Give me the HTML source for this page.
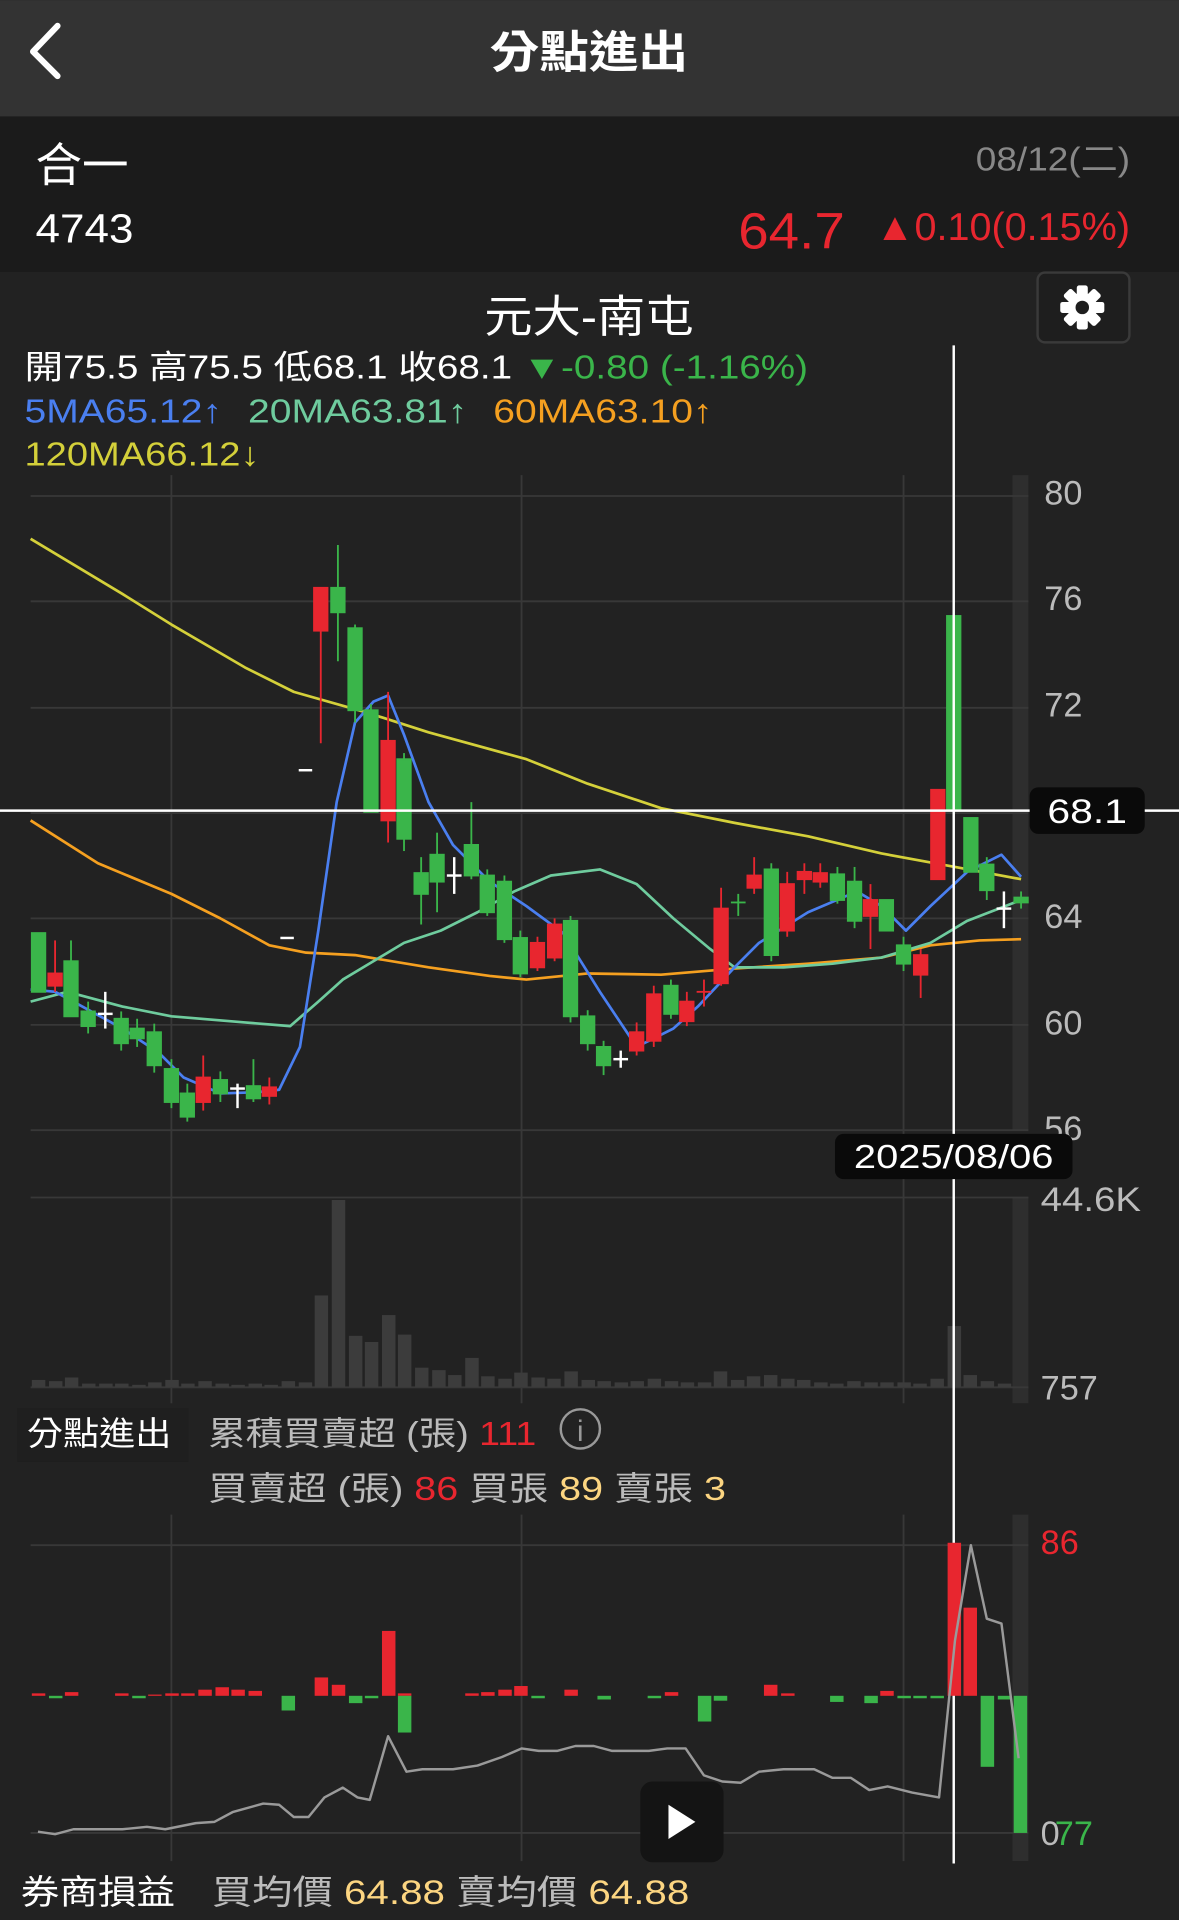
<!DOCTYPE html>
<html><head><meta charset="utf-8"><style>
html,body{margin:0;padding:0;background:#222;}
svg{display:block;}
text{font-family:"Liberation Sans","Noto Sans CJK TC",sans-serif;}
</style></head><body>
<svg width="1179" height="1920" viewBox="0 0 963 1568" xmlns="http://www.w3.org/2000/svg">
<rect x="0" y="0" width="963" height="1568" fill="#222"/>
<rect x="0" y="0" width="963" height="95" fill="#333"/>
<path d="M47 21 L27 42 L47 62" fill="none" stroke="#fff" stroke-width="5" stroke-linecap="round" stroke-linejoin="round"/>
<text x="481" y="55" fill="#fff" font-size="36" font-weight="bold" text-anchor="middle" textLength="162" lengthAdjust="spacingAndGlyphs">分點進出</text>
<rect x="0" y="95" width="963" height="127" fill="#1b1b1b"/>
<text x="29" y="148" fill="#fff" font-size="38">合一</text>
<text x="29" y="198" fill="#fff" font-size="33" textLength="80" lengthAdjust="spacingAndGlyphs">4743</text>
<text x="797" y="139" fill="#888" font-size="27" textLength="126" lengthAdjust="spacingAndGlyphs">08/12(二)</text>
<text x="603" y="203" fill="#e8262f" font-size="42" textLength="87" lengthAdjust="spacingAndGlyphs">64.7</text>
<text x="715" y="196" fill="#e8262f" font-size="32" textLength="208" lengthAdjust="spacingAndGlyphs">▲0.10(0.15%)</text>
<rect x="847.5" y="222.5" width="75" height="57" rx="6" fill="#1e1e1e" stroke="#3a3a3a" stroke-width="2"/>
<g transform="translate(884 251)" fill="#fff">
<circle r="12"/>
<g><rect x="-4.5" y="-18" width="9" height="36" rx="2"/><rect x="-4.5" y="-18" width="9" height="36" rx="2" transform="rotate(45)"/><rect x="-4.5" y="-18" width="9" height="36" rx="2" transform="rotate(90)"/><rect x="-4.5" y="-18" width="9" height="36" rx="2" transform="rotate(135)"/></g>
<circle r="5.5" fill="#1e1e1e"/>
</g>
<text x="481" y="271" fill="#fff" font-size="36" text-anchor="middle" textLength="171" lengthAdjust="spacingAndGlyphs">元大-南屯</text>
<text x="20" y="309" font-size="27" fill="#fff" textLength="640" lengthAdjust="spacingAndGlyphs">開75.5 高75.5 低68.1 收68.1 <tspan fill="#3ab54a">▼-0.80 (-1.16%)</tspan></text>
<text x="20" y="345" font-size="27" textLength="562" lengthAdjust="spacingAndGlyphs"><tspan fill="#4a7ff0">5MA65.12↑</tspan><tspan fill="#6fcc9e" dx="18">20MA63.81↑</tspan><tspan fill="#f5a020" dx="18">60MA63.10↑</tspan></text>
<text x="20" y="380" font-size="27" fill="#d4d03a" textLength="192" lengthAdjust="spacingAndGlyphs">120MA66.12↓</text>

<rect x="827" y="388" width="13" height="535" fill="#2e2e2e"/>
<rect x="827" y="978" width="13" height="168" fill="#2e2e2e"/>
<rect x="827" y="1237" width="13" height="283" fill="#2e2e2e"/>
<g stroke="#383838" stroke-width="1.5">
<line x1="25" y1="405" x2="840" y2="405"/><line x1="25" y1="491" x2="840" y2="491"/><line x1="25" y1="578" x2="840" y2="578"/><line x1="25" y1="664" x2="840" y2="664"/><line x1="25" y1="750" x2="840" y2="750"/><line x1="25" y1="837" x2="840" y2="837"/><line x1="25" y1="923" x2="840" y2="923"/>
<line x1="25" y1="978" x2="840" y2="978"/><line x1="25" y1="1133" x2="840" y2="1133"/>
<line x1="25" y1="1262" x2="840" y2="1262"/><line x1="25" y1="1497" x2="840" y2="1497"/>
<line x1="140" y1="388" x2="140" y2="1146"/><line x1="426" y1="388" x2="426" y2="1146"/><line x1="738" y1="388" x2="738" y2="1146"/>
<line x1="140" y1="1237" x2="140" y2="1520"/><line x1="426" y1="1237" x2="426" y2="1520"/><line x1="738" y1="1237" x2="738" y2="1520"/>
</g>
<g fill="#bbb" font-size="28">
<text x="853" y="412">80</text><text x="853" y="498">76</text><text x="853" y="585">72</text><text x="853" y="758">64</text><text x="853" y="845">60</text><text x="853" y="931">56</text>
<text x="850" y="989" textLength="82" lengthAdjust="spacingAndGlyphs">44.6K</text><text x="850" y="1143">757</text>
</g>

<g fill="none" stroke-width="2.2" stroke-linejoin="round">
<polyline stroke="#d4d03a" points="25,440 100,485 140,510 200,545 240,565 300,582 350,598 430,620 480,640 540,660 600,672 660,683 720,697 780,708 834,718"/>
<polyline stroke="#f5a020" points="25,670 80,705 140,730 180,750 220,772 250,778 290,780 350,790 400,797 430,800 480,795 540,796 600,791 660,787 720,782 760,772 800,768 834,767"/>
<polyline stroke="#6fcc9e" points="25,818 55,810 100,822 140,830 200,835 237,838 260,818 280,800 300,788 330,770 360,760 390,745 420,728 450,715 490,710 520,722 550,750 580,775 600,790 640,790 680,787 720,782 760,770 790,752 834,735"/>
<polyline stroke="#4a7ff0" points="25,808 45,810 60,818 100,840 130,860 150,880 180,893 210,892 228,890 245,855 260,760 275,655 290,590 305,573 317,568 330,600 350,655 370,690 400,720 430,740 460,762 490,810 520,855 550,840 570,822 600,790 620,770 660,745 700,728 720,740 740,760 760,740 790,712 818,698 834,716"/>
</g>

<g stroke-width="1.5">
<g fill="#3ab54a" stroke="#3ab54a">
<rect x="26" y="762" width="11" height="48"/>
<line x1="58" y1="768" x2="58" y2="830"/><rect x="52.5" y="785" width="11" height="45"/>
<line x1="72" y1="818" x2="72" y2="844"/><rect x="66.5" y="826" width="11" height="12"/>
<line x1="99" y1="826" x2="99" y2="858"/><rect x="93.5" y="832" width="11" height="20"/>
<line x1="112" y1="832" x2="112" y2="855"/><rect x="106.5" y="840" width="11" height="8"/>
<line x1="126" y1="836" x2="126" y2="876"/><rect x="120.5" y="843" width="11" height="27"/>
<line x1="140" y1="865" x2="140" y2="905"/><rect x="134.5" y="873" width="11" height="27"/>
<line x1="153" y1="885" x2="153" y2="916"/><rect x="147.5" y="893" width="11" height="19"/>
<line x1="180" y1="875" x2="180" y2="900"/><rect x="174.5" y="882" width="11" height="11"/>
<line x1="207" y1="865" x2="207" y2="900"/><rect x="201.5" y="887" width="11" height="10"/>
<line x1="276" y1="445" x2="276" y2="540"/><rect x="270.5" y="480" width="11" height="20"/>
<line x1="290" y1="510" x2="290" y2="590"/><rect x="284.5" y="513" width="11" height="67"/>
<line x1="303" y1="575" x2="303" y2="663"/><rect x="297.5" y="580" width="11" height="83"/>
<line x1="330" y1="615" x2="330" y2="695"/><rect x="324.5" y="620" width="11" height="65"/>
<line x1="344" y1="700" x2="344" y2="755"/><rect x="338.5" y="713" width="11" height="17"/>
<line x1="357" y1="680" x2="357" y2="745"/><rect x="351.5" y="698" width="11" height="22"/>
<line x1="385" y1="655" x2="385" y2="718"/><rect x="379.5" y="690" width="11" height="25"/>
<line x1="398" y1="710" x2="398" y2="748"/><rect x="392.5" y="715" width="11" height="30"/>
<line x1="412" y1="715" x2="412" y2="770"/><rect x="406.5" y="720" width="11" height="47"/>
<line x1="425" y1="760" x2="425" y2="798"/><rect x="419.5" y="766" width="11" height="29"/>
<line x1="466" y1="748" x2="466" y2="835"/><rect x="460.5" y="752" width="11" height="78"/>
<line x1="480" y1="825" x2="480" y2="858"/><rect x="474.5" y="830" width="11" height="22"/>
<line x1="493" y1="850" x2="493" y2="878"/><rect x="487.5" y="855" width="11" height="15"/>
<line x1="548" y1="800" x2="548" y2="832"/><rect x="542.5" y="805" width="11" height="23"/>
<line x1="630" y1="705" x2="630" y2="785"/><rect x="624.5" y="710" width="11" height="70"/>
<line x1="684" y1="708" x2="684" y2="738"/><rect x="678.5" y="714" width="11" height="21"/>
<line x1="698" y1="708" x2="698" y2="758"/><rect x="692.5" y="720" width="11" height="32"/>
<rect x="718.5" y="735" width="11" height="25"/>
<line x1="738" y1="765" x2="738" y2="793"/><rect x="732.5" y="772" width="11" height="15"/>
<rect x="773.5" y="503" width="11" height="159"/>
<rect x="787.5" y="668" width="11" height="44"/>
<line x1="806" y1="700" x2="806" y2="735"/><rect x="800.5" y="706" width="11" height="21"/>
<line x1="834" y1="728" x2="834" y2="742"/><rect x="828.5" y="733" width="11" height="4"/>
<line x1="603" y1="730" x2="603" y2="748"/><line x1="597" y1="737" x2="609" y2="737"/>
</g>
<g fill="#e8262f" stroke="#e8262f">
<line x1="45" y1="768" x2="45" y2="810"/><rect x="39.5" y="795" width="11" height="10"/>
<line x1="166" y1="862" x2="166" y2="907"/><rect x="160.5" y="880" width="11" height="20"/>
<line x1="220" y1="880" x2="220" y2="902"/><rect x="214.5" y="888" width="11" height="7"/>
<line x1="262" y1="480" x2="262" y2="607"/><rect x="256.5" y="480" width="11" height="35"/>
<line x1="317" y1="565" x2="317" y2="688"/><rect x="311.5" y="605" width="11" height="65"/>
<line x1="439" y1="765" x2="439" y2="793"/><rect x="433.5" y="770" width="11" height="20"/>
<line x1="453" y1="750" x2="453" y2="785"/><rect x="447.5" y="755" width="11" height="27"/>
<line x1="520" y1="835" x2="520" y2="862"/><rect x="514.5" y="843" width="11" height="15"/>
<line x1="534" y1="805" x2="534" y2="855"/><rect x="528.5" y="812" width="11" height="38"/>
<line x1="561" y1="810" x2="561" y2="838"/><rect x="555.5" y="818" width="11" height="16"/>
<line x1="575" y1="800" x2="575" y2="822"/><line x1="569" y1="810" x2="581" y2="810"/>
<line x1="589" y1="725" x2="589" y2="805"/><rect x="583.5" y="742" width="11" height="61"/>
<line x1="616" y1="700" x2="616" y2="730"/><rect x="610.5" y="715" width="11" height="10"/>
<line x1="643" y1="712" x2="643" y2="765"/><rect x="637.5" y="722" width="11" height="38"/>
<line x1="657" y1="705" x2="657" y2="730"/><rect x="651.5" y="712" width="11" height="6"/>
<line x1="670" y1="705" x2="670" y2="725"/><rect x="664.5" y="713" width="11" height="7"/>
<line x1="711" y1="722" x2="711" y2="775"/><rect x="705.5" y="735" width="11" height="13"/>
<line x1="752" y1="775" x2="752" y2="815"/><rect x="746.5" y="780" width="11" height="16"/>
<rect x="760.5" y="645" width="11" height="73"/>
</g>
<g stroke="#fff" stroke-width="2">
<line x1="86" y1="810" x2="86" y2="840"/><line x1="80" y1="828" x2="92" y2="828"/>
<line x1="194" y1="885" x2="194" y2="905"/><line x1="188" y1="889" x2="200" y2="889"/>
<line x1="229" y1="766" x2="240" y2="766"/>
<line x1="244" y1="629" x2="255" y2="629"/>
<line x1="371" y1="700" x2="371" y2="730"/><line x1="365" y1="715" x2="377" y2="715"/>
<line x1="507" y1="858" x2="507" y2="872"/><line x1="501" y1="865" x2="513" y2="865"/>
<line x1="820" y1="728" x2="820" y2="758"/><line x1="814" y1="742" x2="826" y2="742"/>
</g>
</g>

<g fill="#3c3c3c">
<rect x="26" y="1127" width="11" height="6"/><rect x="40" y="1128" width="11" height="5"/><rect x="53" y="1125" width="11" height="8"/><rect x="67" y="1130" width="11" height="3"/><rect x="81" y="1130" width="11" height="3"/><rect x="94" y="1130" width="11" height="3"/><rect x="108" y="1131" width="11" height="2"/><rect x="121" y="1129" width="11" height="4"/><rect x="135" y="1127" width="11" height="6"/><rect x="148" y="1130" width="11" height="3"/><rect x="162" y="1128" width="11" height="5"/><rect x="176" y="1130" width="11" height="3"/><rect x="189" y="1131" width="11" height="2"/><rect x="203" y="1130" width="11" height="3"/><rect x="216" y="1131" width="11" height="2"/><rect x="230" y="1128" width="11" height="5"/><rect x="244" y="1129" width="11" height="4"/>
<rect x="257" y="1058" width="11" height="75"/><rect x="271" y="980" width="11" height="153"/><rect x="285" y="1091" width="11" height="42"/><rect x="298" y="1096" width="11" height="37"/><rect x="312" y="1074" width="11" height="59"/><rect x="325" y="1090" width="11" height="43"/><rect x="339" y="1117" width="11" height="16"/><rect x="353" y="1119" width="11" height="14"/><rect x="366" y="1123" width="11" height="10"/><rect x="380" y="1109" width="11" height="24"/><rect x="393" y="1124" width="11" height="9"/><rect x="407" y="1126" width="11" height="7"/><rect x="420" y="1121" width="11" height="12"/><rect x="434" y="1125" width="11" height="8"/><rect x="447" y="1126" width="11" height="7"/><rect x="461" y="1120" width="11" height="13"/><rect x="475" y="1127" width="11" height="6"/><rect x="488" y="1128" width="11" height="5"/><rect x="502" y="1129" width="11" height="4"/><rect x="515" y="1128" width="11" height="5"/><rect x="529" y="1126" width="11" height="7"/><rect x="543" y="1128" width="11" height="5"/><rect x="556" y="1129" width="11" height="4"/><rect x="570" y="1129" width="11" height="4"/><rect x="583" y="1120" width="11" height="13"/><rect x="597" y="1127" width="11" height="6"/><rect x="610" y="1124" width="11" height="9"/><rect x="624" y="1123" width="11" height="10"/><rect x="638" y="1126" width="11" height="7"/><rect x="651" y="1127" width="11" height="6"/><rect x="665" y="1129" width="11" height="4"/><rect x="678" y="1130" width="11" height="3"/><rect x="692" y="1128" width="11" height="5"/><rect x="706" y="1129" width="11" height="4"/><rect x="719" y="1129" width="11" height="4"/><rect x="733" y="1129" width="11" height="4"/><rect x="746" y="1130" width="11" height="3"/><rect x="760" y="1126" width="11" height="7"/><rect x="774" y="1083" width="11" height="50"/><rect x="787" y="1123" width="11" height="10"/><rect x="801" y="1128" width="11" height="5"/><rect x="815" y="1130" width="11" height="3"/>
</g>

<line x1="779" y1="282" x2="779" y2="1522" stroke="#fff" stroke-width="2"/>
<line x1="0" y1="662" x2="963" y2="662" stroke="#fff" stroke-width="2"/>
<rect x="841" y="643" width="94" height="38" rx="7" fill="#0a0a0a"/>
<text x="888" y="672" fill="#fff" font-size="28" text-anchor="middle" textLength="65" lengthAdjust="spacingAndGlyphs">68.1</text>
<rect x="682" y="926" width="194" height="37" rx="7" fill="#0a0a0a"/>
<text x="779" y="954" fill="#fff" font-size="27" text-anchor="middle" textLength="163" lengthAdjust="spacingAndGlyphs">2025/08/06</text>

<rect x="14" y="1150" width="140" height="44" fill="#1f1f1f"/>
<text x="22" y="1180" fill="#fff" font-size="27" textLength="118" lengthAdjust="spacingAndGlyphs">分點進出</text>
<text x="170" y="1180" fill="#bbb" font-size="27" textLength="268" lengthAdjust="spacingAndGlyphs">累積買賣超 (張) <tspan fill="#e8262f">111</tspan></text>
<circle cx="474" cy="1167" r="16" fill="none" stroke="#999" stroke-width="2"/>
<text x="474" y="1177" fill="#999" font-size="24" text-anchor="middle" font-family="Liberation Serif">i</text>
<text x="170" y="1225" fill="#bbb" font-size="27" textLength="423" lengthAdjust="spacingAndGlyphs">買賣超 (張) <tspan fill="#e8262f">86</tspan> 買張 <tspan fill="#fcd581">89</tspan> 賣張 <tspan fill="#fcd581">3</tspan></text>

<g fill="#e8262f">
<rect x="26" y="1383" width="11" height="2"/><rect x="53" y="1382" width="11" height="3"/><rect x="94" y="1383" width="11" height="2"/><rect x="121" y="1384" width="11" height="1"/><rect x="135" y="1383" width="11" height="2"/><rect x="148" y="1383" width="11" height="2"/><rect x="162" y="1380" width="11" height="5"/><rect x="176" y="1378" width="11" height="7"/><rect x="189" y="1380" width="11" height="5"/><rect x="203" y="1381" width="11" height="4"/>
<rect x="257" y="1370" width="11" height="15"/><rect x="271" y="1376" width="11" height="9"/><rect x="312" y="1332" width="11" height="53"/><rect x="325" y="1383" width="11" height="2"/>
<rect x="380" y="1383" width="11" height="2"/><rect x="393" y="1382" width="11" height="3"/><rect x="407" y="1380" width="11" height="5"/><rect x="420" y="1377" width="11" height="8"/><rect x="461" y="1380" width="11" height="5"/><rect x="543" y="1382" width="11" height="3"/><rect x="624" y="1376" width="11" height="9"/><rect x="638" y="1383" width="11" height="2"/><rect x="719" y="1381" width="11" height="4"/>
<rect x="774" y="1260" width="11" height="125"/><rect x="787" y="1313" width="11" height="72"/>
</g>
<g fill="#3ab54a">
<rect x="40" y="1385" width="11" height="2"/><rect x="108" y="1385" width="11" height="2"/><rect x="230" y="1385" width="11" height="12"/><rect x="285" y="1385" width="11" height="6"/><rect x="298" y="1385" width="11" height="2"/><rect x="325" y="1385" width="11" height="30"/><rect x="434" y="1385" width="11" height="2"/><rect x="488" y="1385" width="11" height="3"/><rect x="529" y="1385" width="11" height="2"/><rect x="570" y="1385" width="11" height="21"/><rect x="583" y="1385" width="11" height="4"/><rect x="678" y="1385" width="11" height="5"/><rect x="706" y="1385" width="11" height="6"/><rect x="733" y="1385" width="11" height="2"/><rect x="746" y="1385" width="11" height="2"/><rect x="760" y="1385" width="11" height="2"/><rect x="801" y="1385" width="11" height="58"/><rect x="815" y="1385" width="11" height="3"/><rect x="828" y="1385" width="11" height="112"/>
</g>
<polyline fill="none" stroke="#9a9a9a" stroke-width="2" stroke-linejoin="round" points="31,1496 45,1498 60,1494 100,1494 120,1492 135,1494 160,1489 175,1488 190,1480 215,1473 228,1474 240,1484 252,1484 265,1468 280,1460 292,1468 302,1470 317,1418 332,1447 345,1445 370,1445 390,1442 410,1435 426,1428 440,1430 455,1430 470,1426 485,1426 500,1430 530,1430 545,1428 560,1428 575,1450 590,1455 605,1456 620,1447 640,1445 665,1445 680,1452 695,1452 710,1462 725,1459 745,1464 767,1468 780,1340 793,1262 806,1322 818,1326 832,1436"/>
<text x="850" y="1269" fill="#e8262f" font-size="28">86</text>
<text x="850" y="1507" fill="#bbb" font-size="28">0<tspan fill="#3ab54a" dx="-4">77</tspan></text>

<rect x="523" y="1455" width="68" height="66" rx="10" fill="#141414"/>
<path d="M546 1474 L568 1488 L546 1502 Z" fill="#fff"/>

<text x="17" y="1555" fill="#fff" font-size="28" textLength="126" lengthAdjust="spacingAndGlyphs">券商損益</text>
<text x="173" y="1555" fill="#bbb" font-size="28" textLength="390" lengthAdjust="spacingAndGlyphs">買均價 <tspan fill="#fcd581">64.88</tspan> 賣均價 <tspan fill="#fcd581">64.88</tspan></text>
</svg>
</body></html>
